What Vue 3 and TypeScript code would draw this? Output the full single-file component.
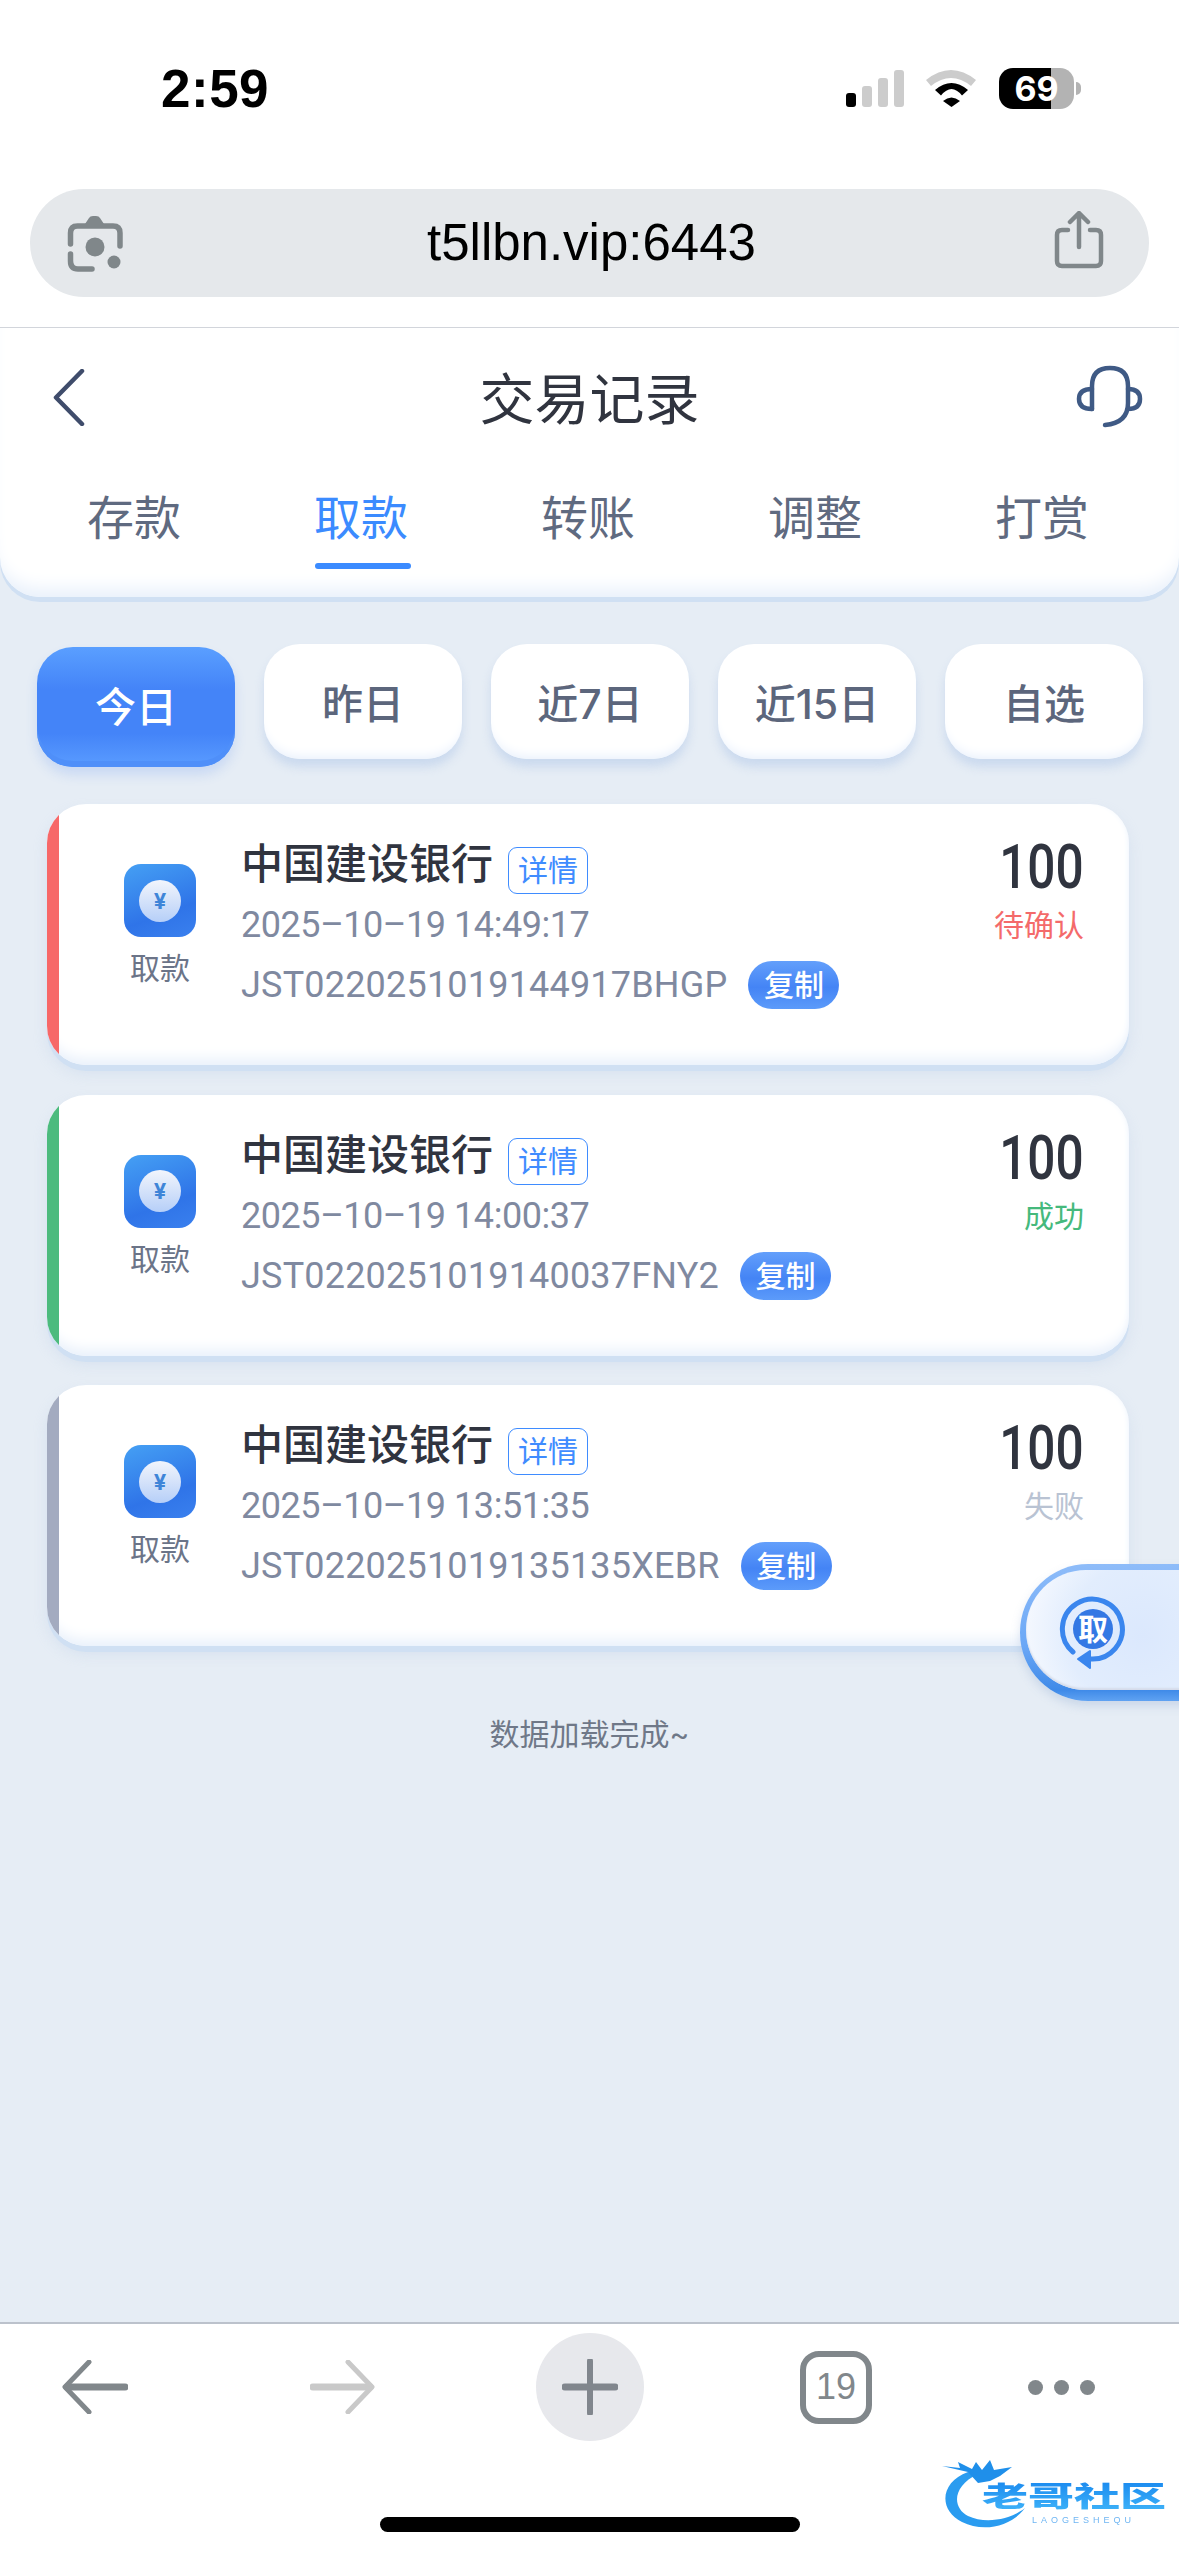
<script setup lang="ts">
interface Trade {
  time: string;
  code: string;
  status: string;
  tone: 'wait' | 'ok' | 'fail';
}

const tabs = ['存款', '取款', '转账', '调整', '打赏'];
const ranges = ['今日', '昨日', '近7日', '近15日', '自选'];
const trades: Trade[] = [
  { time: '2025–10–19 14:49:17', code: 'JST0220251019144917BHGP', status: '待确认', tone: 'wait' },
  { time: '2025–10–19 14:00:37', code: 'JST0220251019140037FNY2', status: '成功', tone: 'ok' },
  { time: '2025–10–19 13:51:35', code: 'JST0220251019135135XEBR', status: '失败', tone: 'fail' },
];
</script>

<template>
  <div class="phone">
    <div class="status">
      <span class="clock">2:59</span>
      <div class="status-icons">
        <div class="signal">
          <i class="on" />
          <i />
          <i />
          <i />
        </div>
        <svg class="wifi" width="51" height="37" viewBox="0 0 51 37">
          <path d="M0 10Q25 -10 50 10L45 16Q25 0 5 16Z" fill="#ccc" />
          <path d="M9 20Q25.5 6 42 20L36 25.5Q25.5 12.5 15 25.5Z" fill="#000" />
          <path d="M17 31Q25.5 24 34 31L25.5 37Z" fill="#000" />
        </svg>
        <div class="battery">69</div>
      </div>
    </div>

    <div class="omni-wrap">
      <div class="omni">
        <svg class="lens" width="70" height="65" viewBox="60 210 70 65" fill="none">
          <path d="M70.5 243V232Q70.5 225 77.5 225H113Q120 225 120 232V245" stroke="#80878a" stroke-width="5.5" stroke-linecap="round" />
          <path d="M70.5 253V260Q70.5 268 78 268H92" stroke="#80878a" stroke-width="5.5" stroke-linecap="round" />
          <path d="M83 226L89 217Q90 215 93 215H96Q99 215 100 217L106 226Z" fill="#80878a" />
          <circle cx="95" cy="246" r="9.5" fill="#80878a" />
          <circle cx="114" cy="261" r="6.5" fill="#80878a" />
        </svg>
        <span class="url">t5llbn.vip:6443</span>
        <svg class="share" width="52" height="60" viewBox="0 0 52 60" fill="none" stroke="#80878a" stroke-width="4.5" stroke-linecap="round" stroke-linejoin="round">
          <path d="M15 19H9Q4 19 4 24V50Q4 55 9 55H43Q48 55 48 50V24Q48 19 43 19H37" />
          <path d="M26 36V3M17 11L26 2L35 11" />
        </svg>
      </div>
    </div>

    <header class="head">
      <div class="nav">
        <svg class="back" width="32" height="57" viewBox="0 0 32 57" fill="none">
          <path d="M29 2L3 28.500L29 55" stroke="#3f4c6b" stroke-width="4.500" stroke-linecap="round" stroke-linejoin="round" />
        </svg>
        <h1 class="title">交易记录</h1>
        <svg class="headset" width="70" height="64" viewBox="0 0 70 64" fill="none" stroke="#3f5a85" stroke-width="4.500" stroke-linecap="round">
          <path d="M19 44V21Q19 3 37 3Q55 3 55 21V38Q55 58 32 60" />
          <path d="M19 24Q6 24 6 34Q6 44 19 44" />
          <path d="M55 24Q67 24 67 34Q67 44 55 44" />
        </svg>
      </div>
      <nav class="tabs">
        <span
          v-for="(tab, i) in tabs"
          :key="tab"
          class="tab"
          :class="{ active: i === 1 }"
        >
          {{ tab }}
        </span>
      </nav>
    </header>

    <div class="ranges">
      <span
        v-for="(range, i) in ranges"
        :key="range"
        class="range"
        :class="{ active: i === 0 }"
      >
        {{ range }}
      </span>
    </div>

    <div class="list">
      <article
        v-for="item in trades"
        :key="item.code"
        class="card"
        :class="item.tone"
      >
        <div class="kind">
          <div class="coin">
            <span class="coin-face">¥</span>
          </div>
          <span class="kind-label">取款</span>
        </div>
        <div class="info">
          <div class="bank-row">
            <span class="bank">中国建设银行</span>
            <span class="detail">详情</span>
          </div>
          <div class="time">{{ item.time }}</div>
          <div class="code-row">
            <span class="code">{{ item.code }}</span>
            <span class="copy">复制</span>
          </div>
        </div>
        <div class="side">
          <div class="amount">100</div>
          <div class="state">{{ item.status }}</div>
        </div>
      </article>
    </div>

    <div class="done">数据加载完成~</div>
    <div class="grow" />

    <footer class="bar">
      <div class="bar-row">
        <svg class="b-back" width="66" height="54" viewBox="0 0 66 54" fill="none" stroke="#81878b" stroke-linecap="round" stroke-linejoin="round">
          <path d="M27 2L3 27L27 52" stroke-width="5" />
          <path d="M5 27H63" stroke-width="7" />
        </svg>
        <svg class="b-next" width="65" height="54" viewBox="0 0 65 54" fill="none" stroke="#c9c9c9" stroke-linecap="round" stroke-linejoin="round">
          <path d="M38 2L62 27L38 52" stroke-width="5" />
          <path d="M3 27H60" stroke-width="7" />
        </svg>
        <div class="b-plus">
          <svg width="56" height="56" viewBox="0 0 56 56" fill="none" stroke="#81868d" stroke-linecap="round">
            <path d="M28 2V54" stroke-width="6" />
            <path d="M3 28H53" stroke-width="7" />
          </svg>
        </div>
        <div class="b-tabs">19</div>
        <div class="b-more">
          <i />
          <i />
          <i />
        </div>
      </div>
      <div class="home" />
    </footer>

    <div class="fab">
      <div class="fab-inner">
        <svg width="72" height="78" viewBox="0 0 72 78" fill="none">
          <path d="M16 57A30 30 0 1 1 33 64" stroke="#3a86ee" stroke-width="5" stroke-linecap="round" />
          <path d="M21 64L33 56V73Z" fill="#3a86ee" stroke="#3a86ee" stroke-width="2" stroke-linejoin="round" />
          <circle cx="36" cy="34" r="20" fill="#3478e4" />
          <text x="36" y="45" text-anchor="middle" class="fab-text">取</text>
        </svg>
      </div>
    </div>

    <div class="mark">
      <svg width="279" height="136" viewBox="0 0 279 136">
        <path d="M68 52C40 62 38 90 62 102C82 112 110 108 125 88C110 100 85 104 68 96C52 88 52 66 78 54Z" fill="#2a9cf0" />
        <path d="M42 46L60 48L58 42L72 49L76 42L82 50L90 40L94 50L112 47L100 56L90 61L78 63L68 52Z" fill="#1f8fea" />
      </svg>
      <span class="mark-name">老哥社区</span>
      <span class="mark-sub">LAOGESHEQU</span>
    </div>
  </div>
</template>

<style>
  html,
  body {
    margin: 0;
    background: #e6edf5;
  }
</style>

<style scoped>
  .phone {
    position: relative;
    width: 1179px;
    height: 2556px;
    overflow: hidden;
    display: flex;
    flex-direction: column;
    background: #e6edf5;
    font-family: Inter, "Noto Sans CJK SC", sans-serif;
  }
  .status {
    height: 176px;
    flex-shrink: 0;
    display: flex;
    align-items: center;
    justify-content: space-between;
    padding: 0 105px 0 161px;
    background: #fff;
  }
  .clock {
    font-family: "Liberation Sans", sans-serif;
    font-size: 53px;
    font-weight: 700;
    letter-spacing: 0.5px;
    color: #000;
  }
  .status-icons {
    display: flex;
    align-items: center;
  }
  .signal {
    display: flex;
    align-items: flex-end;
    gap: 6px;
    height: 37px;
    margin-right: 22px;
  }
  .signal i {
    width: 10px;
    border-radius: 3px;
    background: #ccc;
  }
  .signal i:nth-child(1) {
    height: 14px;
    background: #000;
  }
  .signal i:nth-child(2) {
    height: 21px;
  }
  .signal i:nth-child(3) {
    height: 29px;
  }
  .signal i:nth-child(4) {
    height: 37px;
  }
  .wifi {
    margin-right: 22px;
  }
  .battery {
    position: relative;
    width: 75px;
    height: 41px;
    border-radius: 14px;
    background: linear-gradient(90deg, #000 69.5%, #b3b3b3 69.5%);
    color: #fff;
    font-family: Inter, sans-serif;
    font-size: 34px;
    font-weight: 700;
    line-height: 41px;
    text-align: center;
  }
  .battery::after {
    content: '';
    position: absolute;
    left: 77px;
    top: 14px;
    width: 5px;
    height: 13px;
    border-radius: 0 7px 7px 0;
    background: #b3b3b3;
  }
  .omni-wrap {
    flex-shrink: 0;
    padding: 13px 30px 30px;
    background: #fff;
    border-bottom: 1px solid #d2d5db;
  }
  .omni {
    height: 108px;
    border-radius: 54px;
    background: #e5e8eb;
    display: flex;
    align-items: center;
    justify-content: space-between;
    padding: 0 44px 0 30px;
  }
  .url {
    font-family: "Liberation Sans", sans-serif;
    font-size: 51px;
    margin-top: -2px;
    color: #000;
  }
  .share {
    margin-top: -4px;
  }
  .head {
    flex-shrink: 0;
    height: 269px;
    background: #fff;
    border-radius: 0 0 40px 40px;
    box-shadow:
      0 5px 0 #d0e0f3,
      inset 0 -18px 18px -10px #e8f0fb;
  }
  .nav {
    height: 138px;
    display: grid;
    grid-template-columns: 1fr auto 1fr;
    align-items: center;
    padding: 0 36px;
  }
  .back {
    margin-left: 17px;
  }
  .headset {
    justify-self: end;
  }
  .title {
    margin: -5px 0 0;
    font-size: 55px;
    font-weight: 400;
    color: #30343f;
  }
  .tabs {
    display: grid;
    grid-template-columns: repeat(5, 1fr);
    padding: 0 22px;
  }
  .tab {
    position: relative;
    height: 104px;
    line-height: 104px;
    text-align: center;
    text-indent: -3px;
    font-size: 47px;
    color: #5f6a80;
  }
  .tab.active {
    color: #3b8bff;
  }
  .tab.active::after {
    content: '';
    position: absolute;
    left: 50%;
    bottom: 1px;
    width: 96px;
    height: 6px;
    margin-left: -48px;
    border-radius: 3px;
    background: #3b8bff;
  }
  .ranges {
    flex-shrink: 0;
    display: grid;
    grid-template-columns: repeat(5, 198px);
    column-gap: 29px;
    align-items: start;
    padding: 47px 0 0 37px;
  }
  .range {
    height: 115px;
    line-height: 120px;
    text-align: center;
    font-size: 41px;
    font-weight: 500;
    color: #5c667c;
    background: #fff;
    border-radius: 36px;
    box-shadow:
      0 8px 10px rgba(170, 195, 230, 0.45),
      inset 0 -10px 12px -8px #e6effc;
  }
  .range.active {
    height: 120px;
    margin-top: 3px;
    color: #fff;
    background: linear-gradient(180deg, #5a9fff 0%, #4484f8 35%, #4484f8 72%, #5a9cff 100%);
    box-shadow:
      0 8px 12px rgba(70, 130, 240, 0.18),
      inset 0 -6px 0 #4f8ff9;
  }
  .list {
    flex-shrink: 0;
    display: flex;
    flex-direction: column;
    gap: 29.5px;
    padding: 37px 50px 0 47px;
  }
  .card {
    position: relative;
    height: 261px;
    display: flex;
    overflow: hidden;
    background: #fff;
    border-radius: 39px;
    box-shadow:
      0 6px 0 #d0e0f3,
      0 8px 14px rgba(180, 200, 230, 0.3),
      inset 0 -14px 14px -8px #e8f0fb,
      inset -4px 0 6px -4px #eef4fc;
  }
  .card::before {
    content: '';
    position: absolute;
    left: 0;
    top: 0;
    bottom: 0;
    width: 12px;
    background: var(--tone);
  }
  .card.wait {
    --tone: #f76868;
    --text: #f46a6a;
  }
  .card.ok {
    --tone: #4cbb7e;
    --text: #45b97c;
  }
  .card.fail {
    --tone: #a3abc0;
    --text: #b9c3d3;
  }
  .kind {
    width: 72px;
    flex-shrink: 0;
    margin: 0 45px 0 77px;
    padding-top: 60px;
    display: flex;
    flex-direction: column;
    align-items: center;
  }
  .coin {
    width: 72px;
    height: 73px;
    border-radius: 17px;
    display: flex;
    align-items: center;
    justify-content: center;
    background: linear-gradient(160deg, #45a0f4 0%, #2f74e8 65%, #3a80ee 100%);
  }
  .coin-face {
    width: 42px;
    height: 42px;
    border-radius: 50%;
    text-align: center;
    line-height: 42px;
    font-size: 22px;
    font-weight: 700;
    color: #3f85d8;
    background: linear-gradient(180deg, #f2f5fc 0%, #b6cff8 100%);
  }
  .kind-label {
    margin-top: 11px;
    font-size: 30px;
    line-height: 40px;
    white-space: nowrap;
    color: #6b7488;
  }
  .info {
    padding-top: 35px;
    min-width: 0;
  }
  .bank-row {
    display: flex;
    align-items: flex-start;
    height: 50px;
  }
  .bank {
    font-size: 42px;
    line-height: 50px;
    font-weight: 500;
    color: #30343f;
  }
  .detail {
    box-sizing: border-box;
    width: 80px;
    height: 47px;
    margin: 8px 0 0 15px;
    border: 1.5px solid #3f8cff;
    border-radius: 9px;
    text-align: center;
    line-height: 44px;
    font-size: 30px;
    color: #3f8cff;
  }
  .time {
    margin-top: 14px;
    height: 44px;
    line-height: 44px;
    font-family: Roboto, "Noto Sans CJK SC", sans-serif;
    font-size: 36px;
    letter-spacing: -0.45px;
    color: #7f89a0;
    white-space: nowrap;
  }
  .code-row {
    display: flex;
    align-items: center;
    height: 48px;
    margin-top: 14px;
  }
  .code {
    font-family: Roboto, "Noto Sans CJK SC", sans-serif;
    font-size: 36px;
    letter-spacing: 0.2px;
    color: #7f89a0;
    white-space: nowrap;
  }
  .copy {
    width: 91px;
    height: 48px;
    margin-left: 21px;
    border-radius: 24px;
    text-align: center;
    line-height: 48px;
    font-size: 30px;
    font-weight: 500;
    color: #fff;
    background: linear-gradient(180deg, #639ffb 0%, #4484f5 55%, #5c9bfa 100%);
  }
  .side {
    margin-left: auto;
    padding: 33px 45px 0 0;
    text-align: right;
  }
  .amount {
    height: 60px;
    line-height: 60px;
    font-family: Roboto, sans-serif;
    font-size: 62px;
    font-weight: 500;
    color: #30343f;
    transform: scaleX(0.8);
    transform-origin: right center;
  }
  .state {
    margin-top: 8px;
    line-height: 40px;
    font-size: 30px;
    color: var(--text);
    white-space: nowrap;
  }
  .done {
    flex-shrink: 0;
    margin-top: 68px;
    text-align: center;
    line-height: 40px;
    font-size: 30px;
    color: #6f7888;
  }
  .grow {
    flex: 1;
  }
  .bar {
    flex-shrink: 0;
    height: 234px;
    box-sizing: border-box;
    background: #fff;
    border-top: 2px solid #bcc2cc;
  }
  .bar-row {
    display: flex;
    align-items: center;
    height: 108px;
    margin-top: 9px;
    padding-left: 62px;
  }
  .b-next {
    margin-left: 182px;
  }
  .b-plus {
    width: 108px;
    height: 108px;
    margin-left: 161px;
    border-radius: 50%;
    background: #e7e8ec;
    display: flex;
    align-items: center;
    justify-content: center;
  }
  .b-tabs {
    box-sizing: border-box;
    width: 72px;
    height: 73px;
    margin-left: 156px;
    border: 6px solid #81878b;
    border-radius: 19px;
    text-align: center;
    line-height: 60px;
    font-family: "Liberation Sans", sans-serif;
    font-size: 36px;
    color: #81878b;
  }
  .b-more {
    display: flex;
    gap: 11px;
    margin-left: 156px;
  }
  .b-more i {
    width: 15px;
    height: 15px;
    border-radius: 50%;
    background: #81878b;
  }
  .home {
    width: 420px;
    height: 15px;
    margin: 76px auto 0;
    border-radius: 8px;
    background: #000;
  }
  .fab {
    position: absolute;
    left: 1020px;
    top: 1564px;
    width: 200px;
    height: 137px;
    padding: 6px 0 11px 6px;
    box-sizing: border-box;
    border-radius: 68px 0 0 68px;
    background: linear-gradient(180deg, #8ebcf9 0%, #6aa7f6 60%, #3f8ae8 92%, #5fa2f2 100%);
    box-shadow: 0 5px 10px rgba(120, 150, 200, 0.25);
  }
  .fab-inner {
    height: 120px;
    box-sizing: border-box;
    padding: 25px 0 0 31px;
    border-radius: 60px 0 0 60px;
    background: radial-gradient(circle at 60% 55%, #dbe8fd 0%, #e2edfd 55%, #fbfcff 100%);
    box-shadow: inset 0 -2px 2px #d5dcea;
  }
  .fab-text {
    font-size: 30px;
    font-weight: 700;
    fill: #fff;
    font-family: "Noto Sans CJK SC", sans-serif;
  }
  .mark {
    position: absolute;
    left: 900px;
    top: 2420px;
    width: 279px;
    height: 136px;
    filter: blur(0.6px);
  }
  .mark-name {
    position: absolute;
    left: 82px;
    top: 54px;
    width: 184px;
    font-size: 46px;
    line-height: 44px;
    font-weight: 900;
    white-space: nowrap;
    color: transparent;
    background: linear-gradient(180deg, #1c8cf0 0%, #3cb0f8 100%);
    background-clip: text;
    -webkit-background-clip: text;
    transform: scaleY(0.62);
  }
  .mark-sub {
    position: absolute;
    left: 132px;
    top: 95px;
    font-family: "Liberation Sans", sans-serif;
    font-size: 9px;
    line-height: 11px;
    letter-spacing: 4px;
    color: #6fb6f3;
  }
</style>
